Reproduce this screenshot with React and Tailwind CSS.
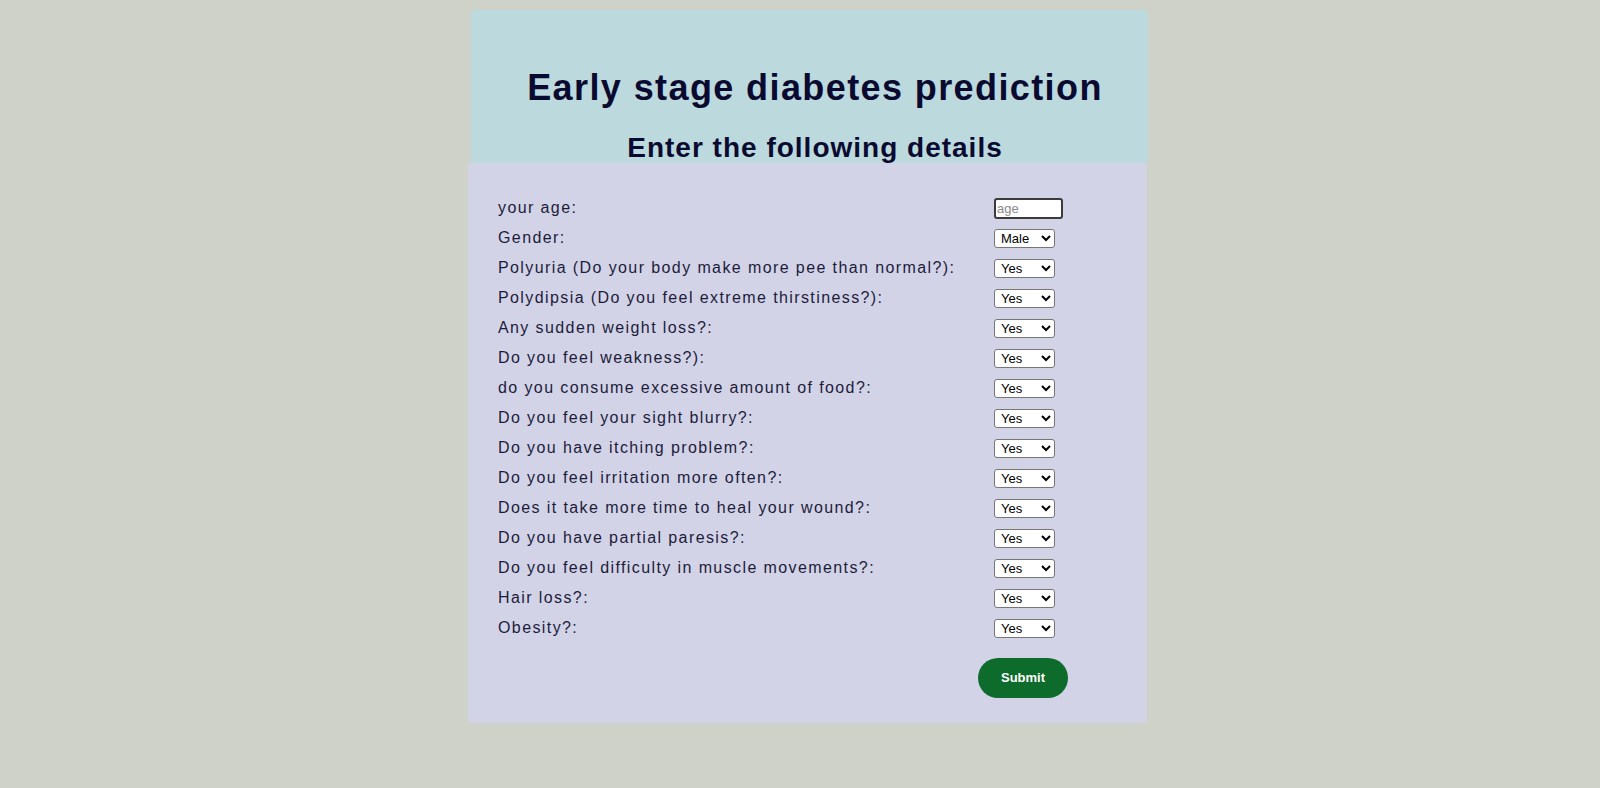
import React from "react";

const rows = [
  "Gender:",
  "Polyuria (Do your body make more pee than normal?):",
  "Polydipsia (Do you feel extreme thirstiness?):",
  "Any sudden weight loss?:",
  "Do you feel weakness?):",
  "do you consume excessive amount of food?:",
  "Do you feel your sight blurry?:",
  "Do you have itching problem?:",
  "Do you feel irritation more often?:",
  "Does it take more time to heal your wound?:",
  "Do you have partial paresis?:",
  "Do you feel difficulty in muscle movements?:",
  "Hair loss?:",
  "Obesity?:",
];

function Sel({ first }) {
  return (
    <select
      defaultValue={first}
      className="w-[61px] h-[19px] bg-white border border-[#767676] rounded-[3px] text-[13px] text-black pl-[2px] [font-family:Arial,'Liberation_Sans',sans-serif]"
    >
      <option>{first}</option>
      <option>{first === "Male" ? "Female" : "No"}</option>
    </select>
  );
}

export default function App() {
  return (
    <div className="min-h-[788px] w-full bg-[#ced2c8] pt-[10px] [font-family:'Liberation_Sans',Arial,sans-serif]">
      <div className="ml-[471px] w-[677px] bg-[#bcd9dd] rounded-t-[4px]">
        <div className="h-[153px] flex flex-col items-center pl-[11px] text-[#0a0a30]">
          <h1 className="mt-[56px] text-[36px] leading-[44px] font-bold tracking-[1.4px]">
            Early stage diabetes prediction
          </h1>
          <h2 className="mt-[22px] text-[28px] leading-[32px] font-bold tracking-[1px]">
            Enter the following details
          </h2>
        </div>
      </div>
      <div className="ml-[468px] w-[679px] bg-[#d3d3e8] rounded-[4px] pt-[30px] pb-[25px] pl-[30px] text-[#1c1c3a]">
        <div className="grid grid-cols-[496px_1fr] auto-rows-[30px] items-center text-[16px] tracking-[1.4px]">
          <div className="leading-[20px] -mt-[1px]">your age:</div>
          <div>
            <input
              placeholder="age"
              className="w-[69px] h-[21px] bg-white border-2 border-[#3b3b3b] rounded-[3px] text-[13px] px-[1px] tracking-normal placeholder:text-[#8a8a8a] outline-none"
            />
          </div>
          {rows.map((r, i) => (
            <React.Fragment key={i}>
              <div className="leading-[20px] -mt-[1px]">{r}</div>
              <div className="tracking-normal">
                <Sel first={i === 0 ? "Male" : "Yes"} />
              </div>
            </React.Fragment>
          ))}
        </div>
        <div className="pl-[480px] mt-[15px]">
          <button className="w-[90px] h-[40px] rounded-full bg-[#0d6b2c] text-white text-[13px] font-bold [font-family:Arial,'Liberation_Sans',sans-serif]">
            Submit
          </button>
        </div>
      </div>
    </div>
  );
}
